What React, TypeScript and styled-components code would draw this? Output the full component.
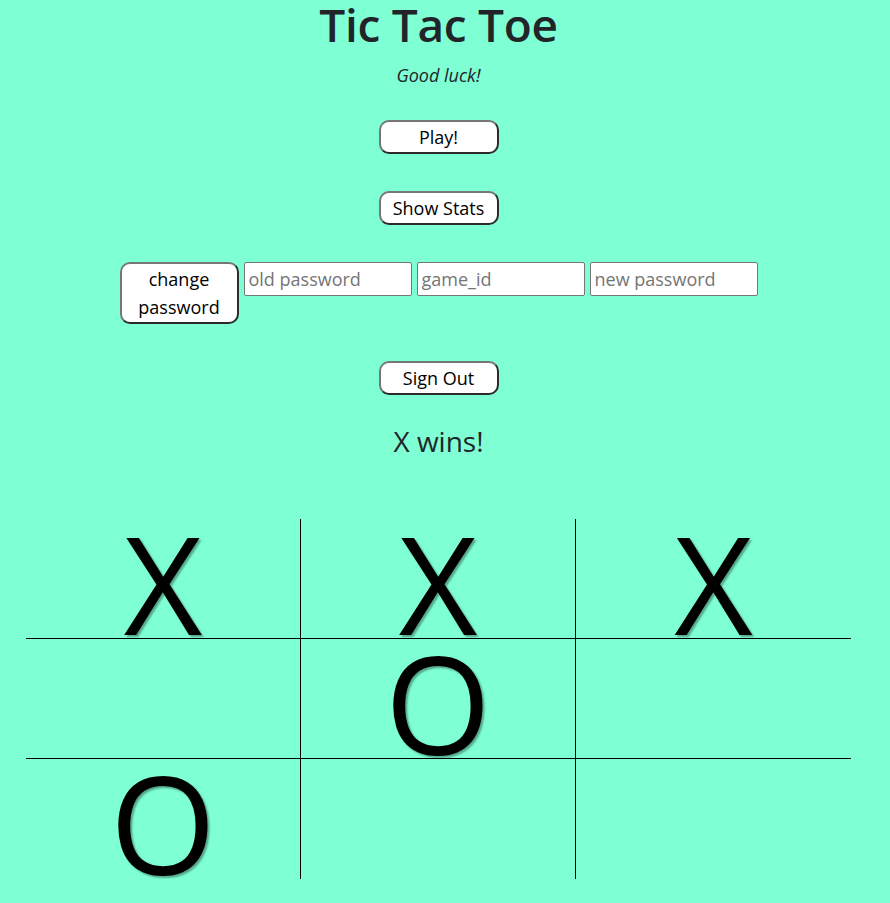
import styled, { createGlobalStyle } from 'styled-components';

const GlobalStyle = createGlobalStyle`
  body {
    margin: 0;
    background-color: #7fffd4;
    font-family: 'Open Sans', 'Noto Sans', sans-serif;
    color: #212529;
  }
`;

const Page = styled.div`
  width: 877px;
  display: flex;
  flex-direction: column;
  align-items: center;
`;

const Title = styled.h1`
  margin: 0;
  font-size: 46px;
  font-weight: 600;
  line-height: 48px;
  letter-spacing: -0.3px;
`;

const Tagline = styled.p`
  margin: 14px 0 0;
  font-size: 18px;
  line-height: 27px;
  font-style: italic;
`;

const ActionButton = styled.button<{ $top: number }>`
  margin-top: ${(props) => props.$top}px;
  width: 120px;
  padding: 1px 6px;
  background-color: #fff;
  color: #000;
  font-family: inherit;
  font-size: 18px;
  line-height: 28px;
  border: 2px solid;
  border-color: #767676 #2b2b2b #2b2b2b #767676;
  border-radius: 10px;
`;

const PasswordRow = styled.div`
  margin-top: 37px;
  display: flex;
  align-items: flex-start;
  gap: 5px;

  ${ActionButton} {
    width: 119px;
  }
`;

const TextInput = styled.input`
  box-sizing: border-box;
  width: 168px;
  height: 34px;
  padding: 1px 4px;
  font-family: inherit;
  font-size: 18px;
  color: #000;
  background: #fff;
  border: 1px solid #767676;
  border-radius: 2px;

  &::placeholder {
    color: #757575;
  }
`;

const Status = styled.h2`
  margin: 28px 0 0;
  font-size: 28px;
  font-weight: 400;
  line-height: 36px;
`;

const Board = styled.div`
  margin-top: 60px;
  display: grid;
  grid-template-columns: repeat(3, 275px);
  grid-template-rows: repeat(3, 120px);
`;

const Cell = styled.div<{ $right: boolean; $bottom: boolean }>`
  box-sizing: border-box;
  height: 120px;
  padding-top: 8px;
  border-right: ${(props) => (props.$right ? '1px solid #000' : 'none')};
  border-bottom: ${(props) => (props.$bottom ? '1px solid #000' : 'none')};
  text-align: center;
  font-size: 136px;
  line-height: 111px;
  color: #000;
  text-shadow: 2px 2px 2px rgba(0, 0, 0, 0.35);
`;

const cells = ['X', 'X', 'X', '', 'O', '', 'O', '', ''];

const App = () => {
  return (
    <Page>
      <GlobalStyle />
      <Title>Tic Tac Toe</Title>
      <Tagline>Good luck!</Tagline>
      <ActionButton $top={31}>Play!</ActionButton>
      <ActionButton $top={37}>Show Stats</ActionButton>
      <PasswordRow>
        <ActionButton $top={0}>change password</ActionButton>
        <TextInput type="password" placeholder="old password" />
        <TextInput type="text" placeholder="game_id" />
        <TextInput type="password" placeholder="new password" />
      </PasswordRow>
      <ActionButton $top={37}>Sign Out</ActionButton>
      <Status>X wins!</Status>
      <Board>
        {cells.map((mark, i) => (
          <Cell key={i} $right={i % 3 !== 2} $bottom={i < 6}>
            {mark}
          </Cell>
        ))}
      </Board>
    </Page>
  );
};

export default App;
